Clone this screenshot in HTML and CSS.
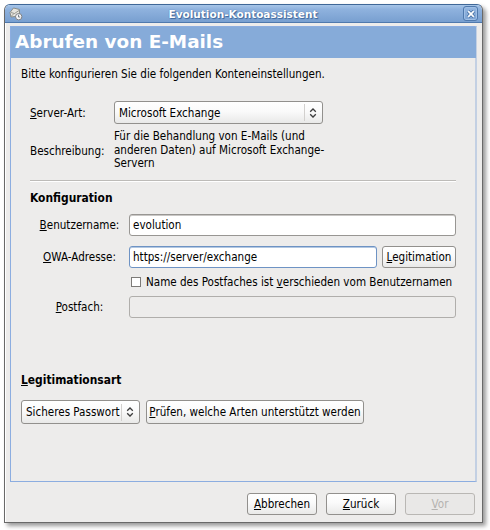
FILE: index.html
```html
<!DOCTYPE html>
<html lang="de">
<head>
<meta charset="utf-8">
<title>Evolution-Kontoassistent</title>
<link rel="stylesheet" href="styles.css">
</head>
<body>
<div class="window">
  <div class="titlebar">
    <svg class="app-icon" width="14" height="14" viewBox="0 0 14 14">
      <path d="M1 5.500 4.500 1 10.500 2.500 10.500 9 2 10Z" fill="#e6e4de" stroke="#85867f" stroke-width=".9"/>
      <path d="M2 5.500 5.500 6.500 10 3.500M2 9.500 5 6.500" fill="none" stroke="#85867f" stroke-width=".8"/>
      <circle cx="9.700" cy="9.700" r="3.200" fill="#f4f5f7" stroke="#7c7f84" stroke-width="1"/>
      <path d="M9.500 7.700V10H11.200" fill="none" stroke="#5c6670" stroke-width=".8"/>
    </svg>
    <span class="title">Evolution-Kontoassistent</span>
    <span class="close"><svg width="8" height="8" viewBox="0 0 8 8"><path d="M1.200 1.200 6.800 6.800M6.800 1.200 1.200 6.800" stroke="#416ba0" stroke-width="3.200"/><path d="M1.200 1.200 6.800 6.800M6.800 1.200 1.200 6.800" stroke="#fff" stroke-width="1.700"/></svg></span>
  </div>
  <div class="frame">
    <h1>Abrufen von E-Mails</h1>
    <p class="intro">Bitte konfigurieren Sie die folgenden Konteneinstellungen.</p>
    <div class="server">
      <label><u>S</u>erver-Art:</label>
      <div class="combo"><span>Microsoft Exchange</span><i></i><svg width="8" height="10" viewBox="0 0 8 10"><path d="M1.200 3.700 4 1 6.800 3.700M1.200 6.300 4 9 6.800 6.300" fill="none" stroke="#3c3c3c" stroke-width="1.300"/></svg></div>
      <label class="desc-label">Beschreibung:</label>
      <p class="desc">Für die Behandlung von E-Mails (und<br>anderen Daten) auf Microsoft Exchange-<br>Servern</p>
    </div>
    <div class="rule"></div>
    <h2 class="config">Konfiguration</h2>
    <div class="row"><label><u>B</u>enutzername:</label><div class="entry">evolution</div></div>
    <div class="row"><label><u>O</u>WA-Adresse:</label><div class="entry focus">https://server/exchange</div><div class="button auth"><span><u>L</u>egitimation</span></div></div>
    <div class="check"><b></b><span>Name des Postfaches ist <u>v</u>erschieden vom Benutzernamen</span></div>
    <div class="row"><label><u>P</u>ostfach:</label><div class="entry disabled"></div></div>
    <h2 class="auth-title"><u>L</u>egitimationsart</h2>
    <div class="auth-row">
      <div class="combo small"><span>Sicheres Passwort</span><i></i><svg width="8" height="10" viewBox="0 0 8 10"><path d="M1.200 3.700 4 1 6.800 3.700M1.200 6.300 4 9 6.800 6.300" fill="none" stroke="#3c3c3c" stroke-width="1.300"/></svg></div>
      <div class="button probe"><span><u>P</u>rüfen, welche Arten unterstützt werden</span></div>
    </div>
  </div>
  <div class="actions">
    <div class="button"><span><u>A</u>bbrechen</span></div>
    <div class="button"><span><u>Z</u>urück</span></div>
    <div class="button off"><span><u>V</u>or</span></div>
  </div>
</div>
</body>
</html>
```
FILE: styles.css
```css
* { box-sizing: border-box; }
body {
  margin: 0;
  padding: 4px;
  height: 530px;
  overflow: hidden;
  background: #fff;
  color: #000;
  font: 11.57px/14px "DejaVu Sans Condensed", "DejaVu Sans", sans-serif;
  font-stretch: condensed;
  white-space: nowrap;
}
h1, h2, p { margin: 0; }
u { text-underline-offset: 1px; text-decoration-thickness: 1px; }
.window {
  width: 479px;
  height: 519px;
  border: 1px solid #696969;
  border-top-color: #3f6797;
  border-radius: 6px 6px 0 0;
  background: #edeceb;
  box-shadow: 3px 3px 4px rgba(0, 0, 0, .4), inset 1px 0 #fff;
}
.titlebar {
  height: 18px;
  display: flex;
  align-items: center;
  padding: 0 4px 0 4px;
  border-bottom: 1px solid #4f79ad;
  border-radius: 5px 5px 0 0;
  background: linear-gradient(#a7c5e8, #8fb2de 25%, #789fd0);
}
.title {
  flex: 1;
  text-align: center;
  color: #fff;
  font: bold 10.5px/14px "DejaVu Sans", sans-serif;
  font-stretch: normal;
  text-shadow: 0 0 1px #3c659a, 1px 1px 1px #3c659a;
}
.close {
  width: 15px;
  height: 15px;
  display: flex;
  align-items: center;
  justify-content: center;
  border: 1px solid #4f79ad;
  border-radius: 3px;
  box-shadow: inset 0 0 0 1px #9fbfe6;
}
.frame {
  margin: 3px 5px 0;
  height: 456px;
  border: 1px solid #8cade0;
  border-right: 2px solid #c3d0e3;
}
h1 {
  height: 31px;
  margin-right: -1px;
  padding-left: 4px;
  background: #86abd9;
  color: #fff;
  font: bold 18.4px/30px "DejaVu Sans", sans-serif;
  font-stretch: normal;
}
.intro { margin: 9px 0 0 10px; }
.server {
  margin: 20px 0 0 19px;
  display: grid;
  grid-template-columns: 84px 209px;
  grid-template-rows: 23px 41px;
  row-gap: 6px;
  align-items: center;
}
.desc { line-height: 13.600px; }
.combo, .button {
  display: flex;
  align-items: center;
  border: 1px solid #92908d;
  border-radius: 3px;
  background: linear-gradient(#fff, #fafafa 45%, #e9e9e8);
}
.combo { height: 23px; padding: 0 5px 0 4px; }
.combo span { flex: 1; }
.combo i { width: 1px; height: 17px; background: #d2d0ce; margin-right: 4px; }
.button { justify-content: center; height: 22px; }
.rule { height: 2px; margin: 9px 19px 0 19px; background: #bdbbb8; border-bottom: 1px solid #fff; }
h2 { font: bold 11.9px/14px "DejaVu Sans Condensed", "DejaVu Sans", sans-serif; font-stretch: condensed; }
.config { margin: 9px 0 9px 19px; }
.row { display: flex; height: 22px; margin: 0 19px 10px 28px; align-items: center; }
.row label { width: 90px; text-align: center; padding-right: 9px; }
.entry {
  flex: 1;
  height: 22px;
  padding: 0 3px;
  line-height: 20px;
  border: 1px solid #989693;
  border-radius: 3px;
  background: #fff;
  box-shadow: inset 0 1px #c9c7c5;
}
.focus { border-color: #6e93c4; box-shadow: inset 0 1px #b3c8e2; }
.disabled { background: #edeceb; border-color: #b0aeab; box-shadow: none; }
.auth { width: 74px; margin-left: 5px; }
.check { display: flex; align-items: center; height: 14px; margin: -3px 0 7px 120px; }
.check b { width: 10px; height: 10px; border: 1px solid #7d7b78; background: #fff; margin-right: 5px; }
.auth-title { margin: 55px 0 13px 10px; }
.auth-row { display: flex; gap: 6px; margin-left: 10px; }
.auth-row > * { height: 24px; }
.small { width: 119px; padding: 0 5px 0 4px; }
.probe { width: 218px; }
.actions { display: flex; justify-content: flex-end; gap: 9px; margin: 11px 7px 0 0; }
.actions .button { width: 70px; }
.actions .off { color: #b5b3b0; border-color: #b9b7b4; background: #e9e8e7; }
```
